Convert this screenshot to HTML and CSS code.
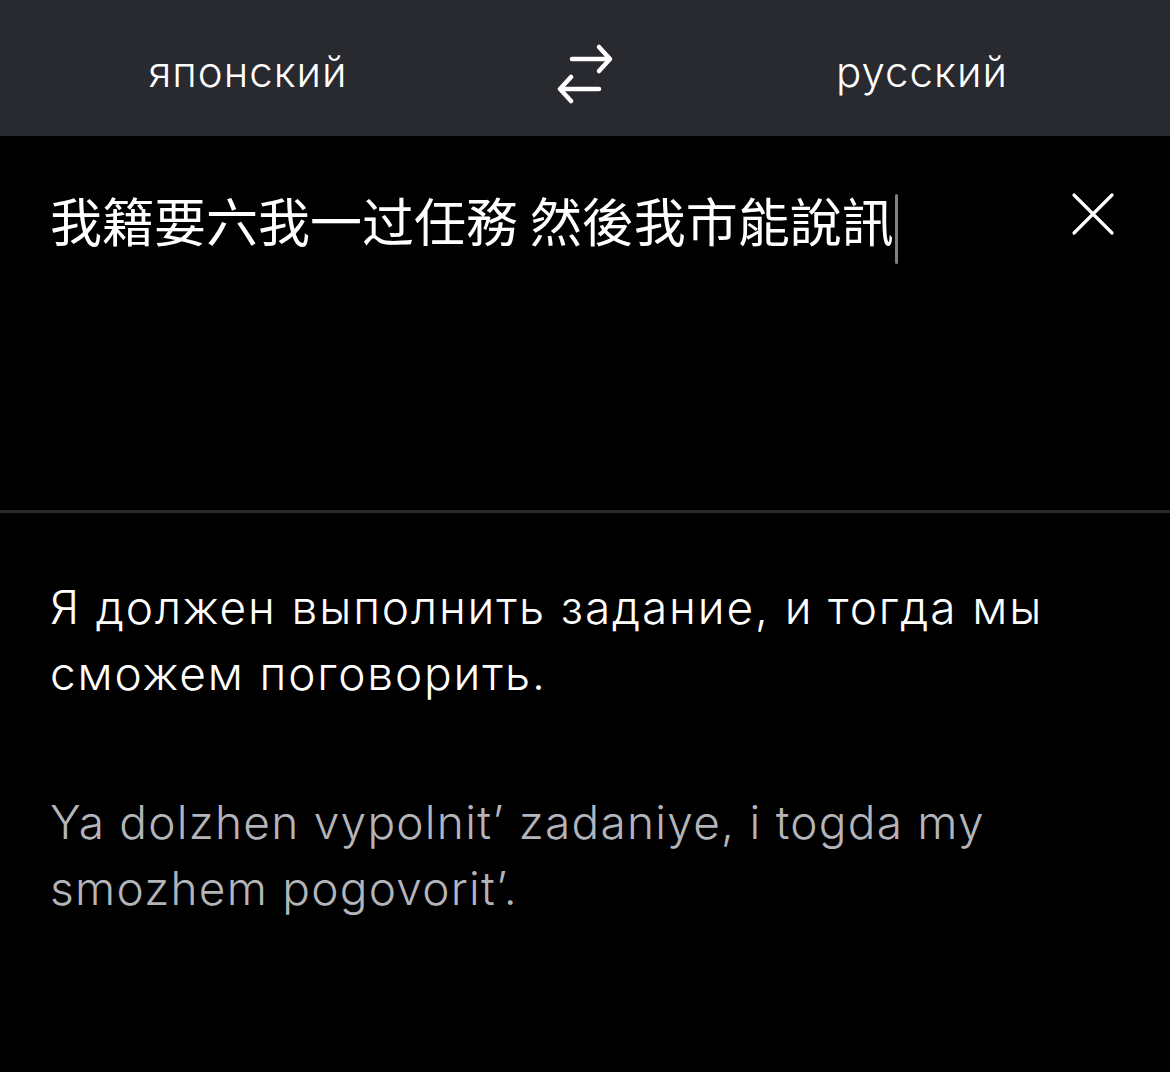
FILE: index.html
```html
<!DOCTYPE html>
<html lang="ru">
<head>
<meta charset="utf-8">
<link rel="stylesheet" href="styles.css">
</head>
<body>
<div class="app">
  <header class="langbar">
    <div class="lang">японский</div>
    <div class="swap">
      <svg width="60" height="70" viewBox="0 0 60 70" fill="none" stroke="#ffffff" stroke-width="4.5" stroke-linecap="round" stroke-linejoin="round">
        <path d="M17 25 H55 M44 13 L55 25 L44 37"/>
        <path d="M44 55 H5 M16 43 L5 55 L16 67"/>
      </svg>
    </div>
    <div class="lang">русский</div>
  </header>
  <section class="source">
    <div class="source-text">我籍要六我一过任務 然後我市能說訊<span class="caret"></span></div>
    <button class="clear" aria-label="Очистить">
      <svg width="44" height="44" viewBox="0 0 44 44" stroke="#ffffff" stroke-width="3.2" stroke-linecap="round">
        <path d="M3 3 L41 41 M41 3 L3 41"/>
      </svg>
    </button>
  </section>
  <div class="divider"></div>
  <section class="result">
    <p class="translation">Я должен выполнить задание, и тогда мы сможем поговорить.</p>
    <p class="translit">Ya dolzhen vypolnit’ zadaniye, i togda my smozhem pogovorit’.</p>
  </section>
</div>
</body>
</html>
```

FILE: styles.css
```css
html, body {
  margin: 0;
  padding: 0;
  background: #000000;
}
body {
  font-family: Inter, "Liberation Sans", Arial, sans-serif;
  font-weight: 350;
  color: #ffffff;
}
.app {
  width: 1170px;
  height: 1072px;
  overflow: hidden;
  background: #000000;
}
.langbar {
  height: 136px;
  background: #282a2f;
  display: grid;
  grid-template-columns: 1fr 278px 1fr;
  align-items: center;
  padding: 0 50px;
}
.lang {
  text-align: center;
  font-size: 42px;
  letter-spacing: 1px;
  color: #ffffff;
  padding-top: 6px;
}
.swap {
  display: flex;
  justify-content: center;
  align-items: center;
}
.swap svg {
  display: block;
  margin-top: 2px;
}
.source {
  height: 374px;
  display: flex;
  align-items: flex-start;
  justify-content: space-between;
  padding: 0 55px 0 50px;
}
.source-text {
  margin-top: 51px;
  font-family: "Noto Sans CJK TC", "Noto Sans CJK JP", sans-serif;
  font-weight: 400;
  font-size: 52px;
  line-height: 66px;
  color: #ffffff;
  display: flex;
  align-items: flex-start;
}
.caret {
  display: block;
  width: 3px;
  height: 70px;
  margin-top: 7px;
  background: #7d7f85;
  border-radius: 2px;
  margin-left: 1px;
}
.clear {
  background: none;
  border: 0;
  padding: 0;
  margin-top: 56px;
  cursor: pointer;
}
.clear svg {
  display: block;
}
.divider {
  height: 3px;
  background: #2a2a2c;
}
.result {
  padding: 61px 50px 0 50px;
}
.result p {
  margin: 0;
  font-size: 46px;
  line-height: 66px;
  max-width: 1040px;
}
.translation {
  color: #ffffff;
  letter-spacing: 1.85px;
}
.translit {
  margin-top: 83px !important;
  color: #b3b5bb;
  letter-spacing: 1.25px;
}
```
